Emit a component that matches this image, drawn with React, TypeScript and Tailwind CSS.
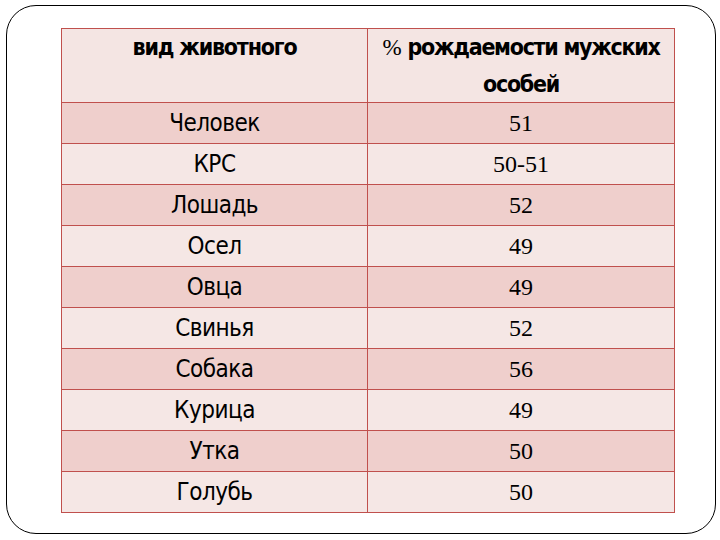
const rows: [string, string][] = [
  ['Человек', '51'],
  ['КРС', '50-51'],
  ['Лошадь', '52'],
  ['Осел', '49'],
  ['Овца', '49'],
  ['Свинья', '52'],
  ['Собака', '56'],
  ['Курица', '49'],
  ['Утка', '50'],
  ['Голубь', '50'],
];

const narrow = "font-['Liberation_Sans_Narrow','DejaVu_Sans_Condensed','Liberation_Sans',sans-serif]";

export default function App() {
  return (
    <div className="w-[720px] h-[540px] bg-white pt-[5px] pl-[6px]">
      <div className="w-[710px] h-[529px] rounded-[30px] border border-black pt-[22px] pl-[54px]">
        <table className="w-[614px] border-collapse text-black">
          <thead>
            <tr className="h-[74px] bg-[#f4e5e3]">
              <th
                className={`w-[306px] border border-[#c0504d] align-top pt-0 text-[23px] leading-[36px] font-bold tracking-[-1.2px] ${narrow}`}
              >
                вид животного
              </th>
              <th
                className={`border border-[#c0504d] align-top pt-0 text-[23px] leading-[36px] font-bold tracking-[-1.3px] ${narrow}`}
              >
                <span className="font-['Liberation_Serif',serif] font-normal tracking-normal">%</span> рождаемости мужских
                <br />
                особей
              </th>
            </tr>
          </thead>
          <tbody>
            {rows.map(([animal, pct], i) => (
              <tr key={animal} className={i % 2 === 0 ? 'h-[41px] bg-[#efcfcc]' : 'h-[41px] bg-[#f5e7e5]'}>
                <td className={`border border-[#c0504d] text-center text-[24px] leading-none tracking-[-0.5px] ${narrow}`}>
                  {animal}
                </td>
                <td className="border border-[#c0504d] text-center text-[24px] leading-none font-['Liberation_Serif',serif]">
                  {pct}
                </td>
              </tr>
            ))}
          </tbody>
        </table>
      </div>
    </div>
  );
}
